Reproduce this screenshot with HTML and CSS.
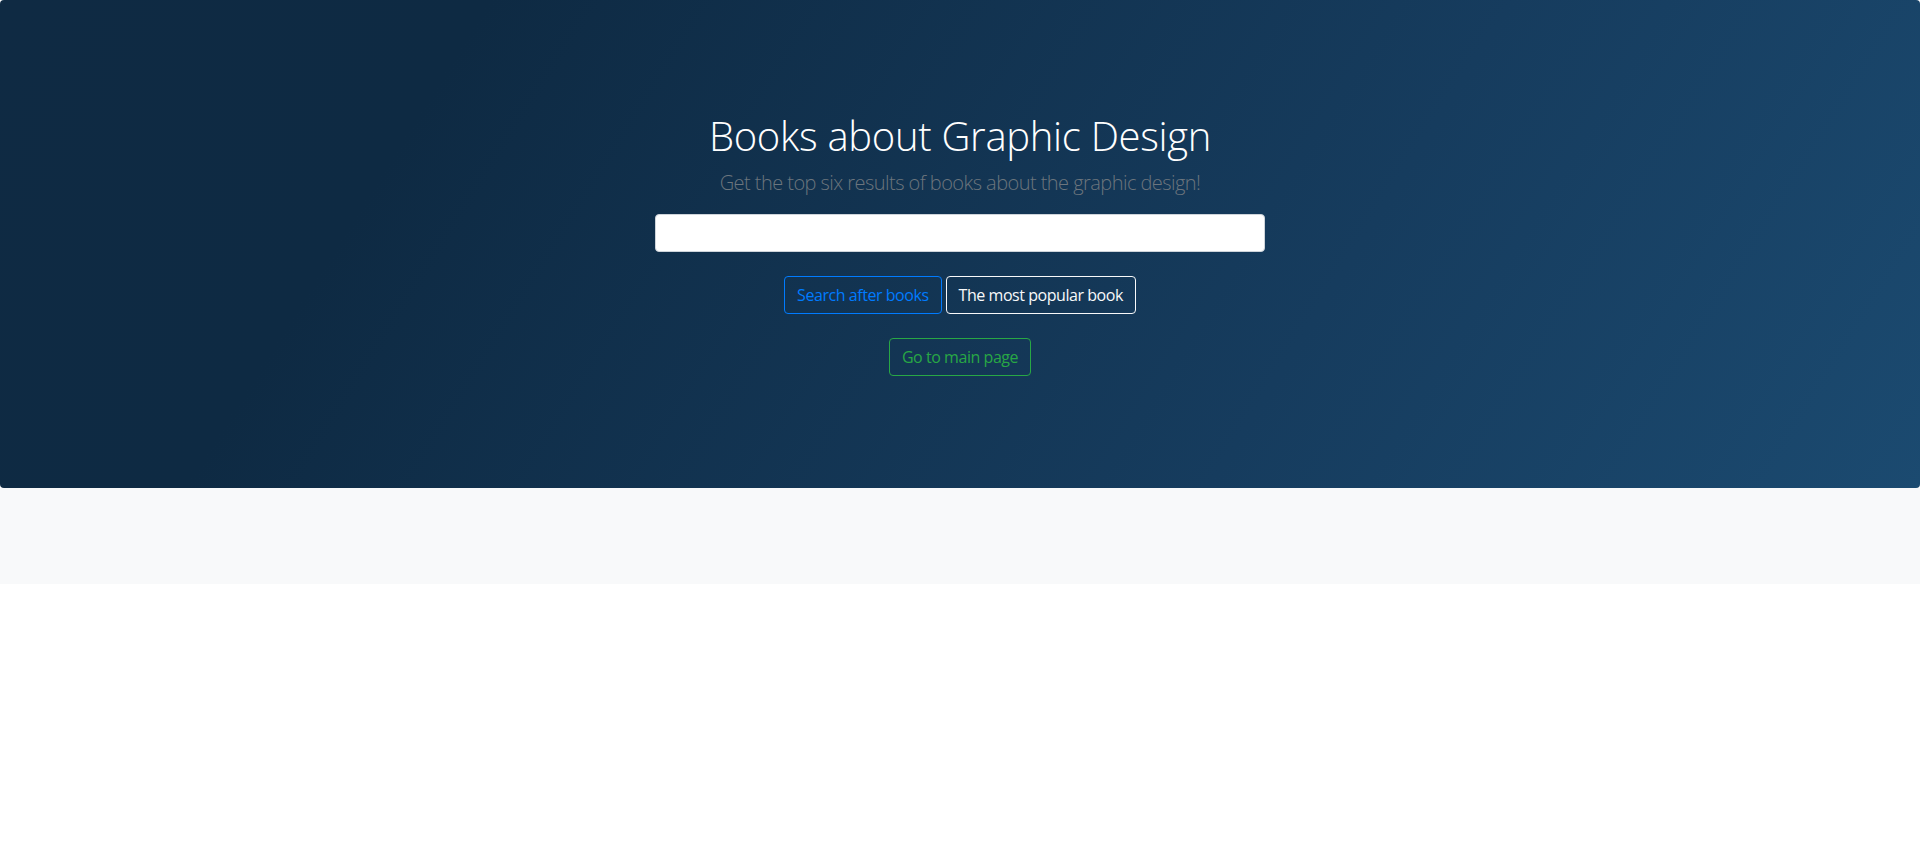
FILE: index.html
```html
<!DOCTYPE html>
<html lang="en">
<head>
<meta charset="utf-8">
<title>Books about Graphic Design</title>
<link rel="stylesheet" href="styles.css">
</head>
<body>
<header class="hero">
  <h1 class="hero-title">Books about Graphic Design</h1>
  <p class="hero-lead">Get the top six results of books about the graphic design!</p>
  <input class="search-input" type="text" aria-label="Search">
  <div class="btn-row">
    <button class="btn btn-blue">Search after books</button>
    <button class="btn btn-light">The most popular book</button>
  </div>
  <div class="btn-row">
    <button class="btn btn-green">Go to main page</button>
  </div>
</header>
<section class="results"></section>
</body>
</html>
```

FILE: styles.css
```css
* { box-sizing: border-box; }
html, body { margin: 0; padding: 0; }
body {
  font-family: "Open Sans", "Noto Sans", sans-serif;
  background: #ffffff;
  color: #212529;
}
.hero {
  height: 488px;
  border-radius: 4px;
  background: linear-gradient(122deg, #0f2a43 0%, #0e2a43 22%, #163c5e 68%, #1b4a70 100%);
  display: flex;
  flex-direction: column;
  align-items: center;
  padding-top: 112px;
}
.hero-title {
  margin: 0 0 8px;
  font-size: 40px;
  font-weight: 300;
  line-height: 48px;
  letter-spacing: -0.3px;
  color: #ffffff;
}
.hero-lead {
  margin: 0 0 16px;
  font-size: 20px;
  font-weight: 300;
  line-height: 30px;
  letter-spacing: -0.55px;
  color: #6c757d;
}
.search-input {
  width: 610px;
  height: 38px;
  border: 1px solid #ced4da;
  border-radius: 4px;
  background: #fff;
  font: inherit;
}
.btn-row {
  display: flex;
  gap: 4px;
  margin-top: 24px;
}
.btn {
  height: 38px;
  padding: 0 12px;
  border: 1px solid;
  border-radius: 4px;
  background: transparent;
  font-family: inherit;
  font-size: 16px;
  font-weight: 400;
  letter-spacing: -0.45px;
  cursor: pointer;
}
.btn-blue { color: #007bff; border-color: #007bff; }
.btn-light { color: #f8f9fa; border-color: #f8f9fa; }
.btn-green { color: #28a745; border-color: #28a745; }
.results {
  height: 96px;
  background: #f8f9fa;
}
```
